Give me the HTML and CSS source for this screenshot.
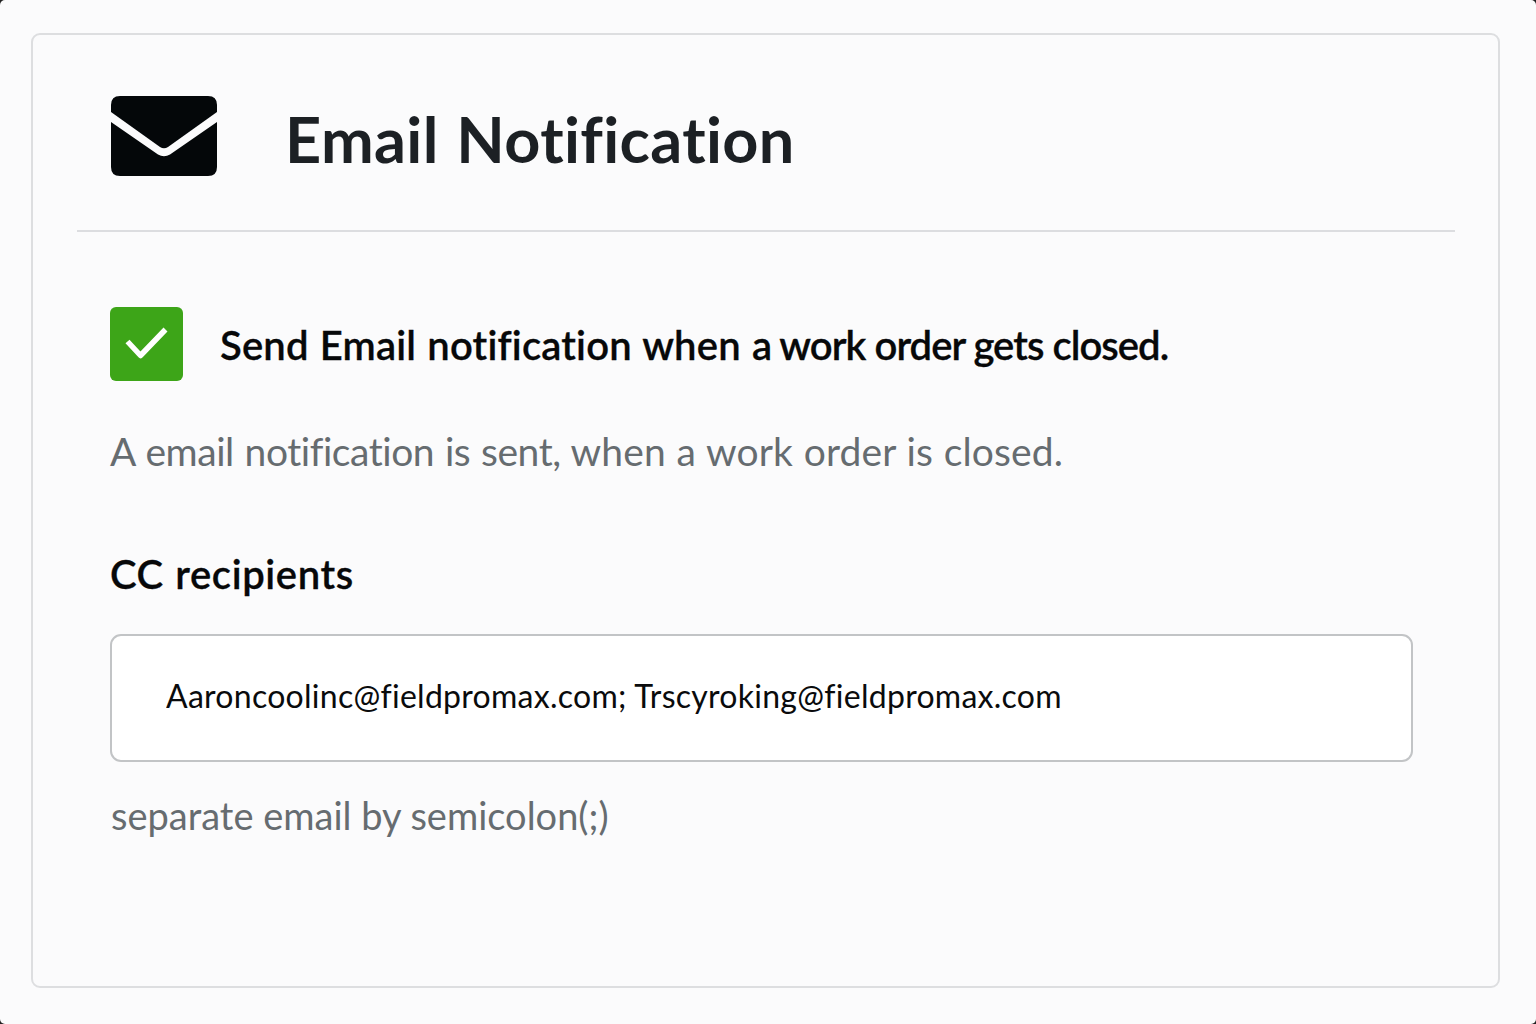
FILE: index.html
```html
<!DOCTYPE html>
<html lang="en">
<head>
    <meta charset="UTF-8">
    <title>Email Notification</title>
    <link rel="stylesheet" href="styles.css">
</head>
<body>
<div class="page">
    <div class="card">
        <div class="header">
            <svg class="mail-icon" viewBox="0 0 106 80">
                <path d="M0 16V9Q0 0 9 0H97Q106 0 106 9V16L57 51Q53 53.500 49 51Z"/>
                <path d="M0 26L47 58.500Q53 62 59 58.500L106 26V71Q106 80 97 80H9Q0 80 0 71Z"/>
            </svg>
            <h1 class="title">Email Notification</h1>
        </div>
        <div class="content">
            <label class="check-row">
                <span class="check-box">
                    <svg viewBox="0 0 73 74">
                        <path d="M17.500 34.500L30.500 48.500L55.500 22.500"/>
                    </svg>
                </span>
                <span class="check-text">Send Email notification when a <span class="tight">work order gets closed.</span></span>
            </label>
            <p class="desc"><span class="tight">A email notification is sent,</span> when a work order is closed.</p>
            <label class="cc-label" for="cc">CC recipients</label>
            <input class="cc-inp" id="cc" value="Aaroncoolinc@fieldpromax.com; Trscyroking@fieldpromax.com">
            <p class="hint">separate email by semicolon(;)</p>
        </div>
    </div>
</div>
</body>
</html>
```
FILE: styles.css
```css
* {
    box-sizing: border-box;
}

html, body {
    height: 100%;
    margin: 0;
    background: #222;
}

body {
    font-family: Lato, "Liberation Sans", sans-serif;
    font-variant-ligatures: none;
}

.page {
    height: 100%;
    padding: 33px 36px 36px 31px;
    border-radius: 5px;
    background: #fbfbfc;
}

.card {
    height: 100%;
    padding: 61px 43px 0 44px;
    border: 2px solid #dddee0;
    border-radius: 9px;
}

.header {
    display: flex;
    gap: 0 70px;
    height: 136px;
    padding-left: 34px;
    border-bottom: 2px solid #dcdde0;
}

.mail-icon {
    width: 106px;
    height: 80px;
    fill: #040709;
}

.title {
    margin: 5px 0 0 -2px;
    font-size: 63px;
    font-weight: 700;
    line-height: 76px;
    letter-spacing: 0.35px;
    word-spacing: 2px;
    color: #1c2024;
}

.content {
    display: flex;
    flex-direction: column;
    padding: 75px 42px 0 33px;
}

.check-row {
    display: flex;
    align-items: center;
    gap: 0 37px;
}

.check-box {
    width: 73px;
    height: 74px;
    border-radius: 6px;
    background: #3da518;

    svg {
        display: block;
        fill: none;
        stroke: #fff;
        stroke-width: 5.5;
        stroke-linejoin: round;
    }
}

.check-text {
    padding-top: 2px;
    font-size: 40px;
    font-weight: 600;
    line-height: 48px;
    letter-spacing: 0.18px;
    word-spacing: 1px;
    color: #070809;
    -webkit-text-stroke: 0.3px #070809;

    .tight {
        margin-left: -4px;
        letter-spacing: -0.95px;
        word-spacing: 0;
    }
}

.desc {
    margin: 46px 0 0;
    font-size: 39px;
    line-height: 48px;
    letter-spacing: 0.16px;
    word-spacing: 0.5px;
    color: #666c70;

    .tight {
        letter-spacing: -0.44px;
        word-spacing: 1.2px;
    }
}

.cc-label {
    margin-top: 75px;
    font-size: 40px;
    font-weight: 600;
    line-height: 48px;
    letter-spacing: 0.6px;
    word-spacing: 1px;
    color: #070809;
    -webkit-text-stroke: 0.3px #070809;
}

.cc-inp {
    width: 1303px;
    height: 128px;
    margin-top: 36px;
    padding: 0 54px 5px;
    border: 2px solid #c2c4c6;
    border-radius: 11px;
    background: #fff;
    font-family: inherit;
    font-size: 32px;
    font-variant-ligatures: none;
    letter-spacing: 0.27px;
    color: #0a0b0c;

    &:focus-visible {
        outline: none;
    }
}

.hint {
    margin: 29px 0 0 1px;
    font-size: 38px;
    line-height: 48px;
    color: #666c70;
}
```
